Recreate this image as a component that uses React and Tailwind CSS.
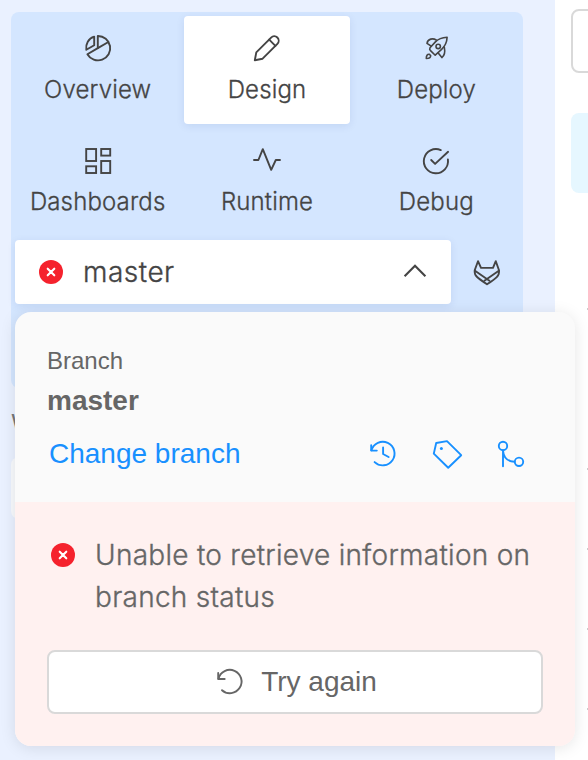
import React from "react";

function Icon({ children, size = 28, className = "" }) {
  return (
    <svg
      width={size}
      height={size}
      viewBox={`0 0 ${size} ${size}`}
      fill="none"
      stroke="currentColor"
      strokeWidth="1.9"
      strokeLinecap="round"
      strokeLinejoin="round"
      className={`block shrink-0 overflow-visible ${className}`}
    >
      {children}
    </svg>
  );
}

const OverviewIcon = () => (
  <Icon>
    <path d="M10.2 2.6V11.2L2.3 15.8C1.3 10 4.6 4.3 10.2 2.6Z" />
    <path d="M13.8 2A12.2 12.2 0 1 1 3.4 20.2L13.8 14.1Z" />
    <path d="M13.8 14.1L24.4 8" />
  </Icon>
);

const PencilIcon = () => (
  <Icon>
    <path d="M1.8 26.2L3.3 18.4L18.1 3.6A4.4 4.4 0 0 1 24.4 9.8L9.6 24.7Z" />
    <path d="M16.2 5.6L22.4 11.8" />
  </Icon>
);

const RocketIcon = () => (
  <Icon>
    <g strokeWidth="1.6">
      <path d="M25.1 3.3C19.5 3.6 16 5.2 13.4 7.9L8 13.8C7.4 14.8 7.7 15.8 8.5 16.6L13.2 21.2L19.6 15.4C23.2 12 24.9 8.5 25.1 3.3Z" />
      <path d="M14.2 6C11 4 5.8 4.6 5 9.3L9.2 12.2" />
      <path d="M22.3 13.2C23.2 17.8 22.6 21.7 19.9 23.6L16.2 18.9" />
      <circle cx="16.2" cy="12.4" r="2.2" />
      <path d="M4.3 24.5C4.3 21.8 5.2 20 7.4 20.3L8.7 21.7C8.6 23.6 6.7 24.5 4.3 24.5Z" />
    </g>
  </Icon>
);

const DashboardsIcon = () => (
  <Icon>
    <g strokeLinejoin="miter">
      <rect x="2.2" y="3" width="9.9" height="12" />
      <rect x="17.2" y="3" width="9" height="6.6" />
      <rect x="2.2" y="20.3" width="9.9" height="6.7" />
      <rect x="17.2" y="15" width="9" height="12" />
    </g>
  </Icon>
);

const RuntimeIcon = () => (
  <Icon>
    <path d="M1 14H5.4L9.8 3.2L18.2 23.8L22.8 14H27" />
  </Icon>
);

const DebugIcon = () => (
  <Icon>
    <path d="M18.8 4.1A12.1 12.1 0 1 0 25.9 13.5" />
    <path d="M9.2 14L13.1 17.9L26.1 5.8" />
  </Icon>
);

const FoxIcon = () => (
  <Icon>
    <path d="M1.7 12.3L5 3.2L8 9.9H20L22.8 3.2L26 12.3C26.6 17.6 24 19.6 14 26.3C4 19.6 1.1 17.6 1.7 12.3Z" />
    <path d="M2 12.7L16.4 22.8M25.8 12.7L11.4 22.8" />
  </Icon>
);

const HistoryIcon = () => (
  <Icon>
    <path d="M2.2 5.2V10.6H7.8" />
    <path d="M2.4 10.3A11.8 11.8 0 1 1 5.6 22.1" />
    <path d="M14.1 7.5V14L19.6 17" />
  </Icon>
);

const TagIcon = () => (
  <Icon>
    <path d="M3.2 3L14 1.1L28.2 15.2L15.2 27.8L.8 13.6Z" />
    <circle cx="8.4" cy="8.6" r="1.5" fill="currentColor" stroke="none" />
  </Icon>
);

const BranchIcon = () => (
  <Icon>
    <circle cx="6" cy="5.9" r="4.2" />
    <circle cx="22" cy="21.8" r="4.2" />
    <path d="M6 10.2V26.2M6 10.5C6.6 17.5 10.5 21.5 17.5 21.8" />
  </Icon>
);

const RetryIcon = () => (
  <Icon>
    <path d="M2.2 4.9V11H8.7" />
    <path d="M2.5 10.7A11.7 11.7 0 1 1 6 22.2" />
  </Icon>
);

const ErrorIcon = () => (
  <svg width="24" height="24" viewBox="0 0 24 24" className="block shrink-0">
    <circle cx="12" cy="12" r="12" fill="#f5222d" />
    <path d="M8.7 8.7L15.3 15.3M15.3 8.7L8.7 15.3" stroke="white" strokeWidth="2.1" strokeLinecap="round" />
  </svg>
);

const tabs = [
  { label: "Overview", Glyph: OverviewIcon },
  { label: "Design", Glyph: PencilIcon, active: true },
  { label: "Deploy", Glyph: RocketIcon },
  { label: "Dashboards", Glyph: DashboardsIcon },
  { label: "Runtime", Glyph: RuntimeIcon },
  { label: "Debug", Glyph: DebugIcon },
];

function BranchPopover() {
  return (
    <div className="absolute left-[15px] top-[312px] h-[434px] w-[560px] overflow-hidden rounded-2xl bg-[#fafafa] font-['Liberation_Sans',sans-serif] text-[#666] shadow-[0_2px_16px_rgba(0,0,0,0.1)]">
      <div className="h-[190px] px-8 pt-7">
        <div className="text-[24px] leading-[42px]">Branch</div>
        <div className="text-[28px] font-bold leading-[38px]">master</div>
        <div className="mt-3 flex h-11 items-center pl-0.5 text-[#1890ff]">
          <span className="text-[28px] leading-[44px]">Change branch</span>
          <div className="ml-auto mr-[18px] flex gap-9">
            <HistoryIcon />
            <TagIcon />
            <BranchIcon />
          </div>
        </div>
      </div>
      <div className="h-[244px] bg-[#fff1f0] px-8 pt-8">
        <div className="flex gap-5 pl-1">
          <div className="pt-[9px]">
            <ErrorIcon />
          </div>
          <p className="whitespace-nowrap font-['Inter',sans-serif] text-[28px] font-light leading-[42px] tracking-[0.28px] [-webkit-text-stroke:0.35px]">
            Unable to retrieve information on
            <br />
            branch status
          </p>
        </div>
        <button className="mt-8 flex h-16 w-full items-center justify-center gap-[17px] rounded-lg border-2 border-[#d9d9d9] bg-white pl-[3px] text-[28px]">
          <RetryIcon />
          <span>Try again</span>
        </button>
      </div>
    </div>
  );
}

export default function App() {
  return (
    <div className="relative flex h-[760px] w-[588px] overflow-hidden bg-white font-['Inter',sans-serif] text-[#444]">
      <aside className="h-full w-[555px] shrink-0 bg-[#eaf1ff] pl-[11px] pt-3">
        <nav className="h-[376px] w-[512px] rounded-lg bg-[#d4e6ff] p-1">
          <div className="grid grid-cols-3 gap-1">
            {tabs.map(({ label, Glyph, active }) => (
              <div
                key={label}
                className={`flex h-[108px] flex-col items-center rounded pt-[18px] ${
                  active ? "bg-white shadow-[0_2px_8px_rgba(0,40,120,0.09)]" : ""
                }`}
              >
                <Glyph />
                <span className="mt-2.5 text-[24px] font-light leading-9 tracking-[0.14px] [-webkit-text-stroke:0.3px]">
                  {label}
                </span>
              </div>
            ))}
          </div>
          <div className="mt-1 flex gap-1">
            <div className="flex h-16 w-[436px] items-center rounded bg-white pl-6 pr-[22px] shadow-[0_2px_8px_rgba(0,40,120,0.09)]">
              <ErrorIcon />
              <span className="ml-5 text-[28px] font-light leading-[42px] tracking-[0.5px] [-webkit-text-stroke:0.35px]">
                master
              </span>
              <Icon className="ml-auto">
                <path d="M3.6 18.2L14 7.8L24.4 18.2" strokeWidth="2.1" strokeLinecap="butt" strokeLinejoin="miter" />
              </Icon>
            </div>
            <div className="flex h-16 w-16 items-center justify-center">
              <FoxIcon />
            </div>
          </div>
        </nav>
        <div className="mt-[18px] text-[24px] leading-[36px] text-[#777]">W</div>
        <div className="mt-[15px] h-[62px] w-[512px] rounded-lg bg-[#f8fafd]" />
      </aside>
      <main className="flex w-[33px] flex-col overflow-hidden pl-4 pt-[9px]">
        <div className="h-16 w-20 shrink-0 rounded-lg border-2 border-[#d9d9d9]" />
        <div className="mt-10 h-20 w-20 shrink-0 rounded-lg bg-[#e6f7ff]" />
        <div className="ml-4 mt-[115px] h-0.5 w-1 shrink-0 bg-[#ccc]" />
        <div className="ml-4 mt-[158px] h-0.5 w-1 shrink-0 bg-[#ccc]" />
        <div className="ml-4 mt-[78px] h-0.5 w-1 shrink-0 bg-[#ccc]" />
        <div className="ml-4 mt-[78px] h-0.5 w-1 shrink-0 bg-[#ccc]" />
        <div className="ml-4 mt-[78px] h-0.5 w-1 shrink-0 bg-[#ccc]" />
      </main>
      <BranchPopover />
    </div>
  );
}
